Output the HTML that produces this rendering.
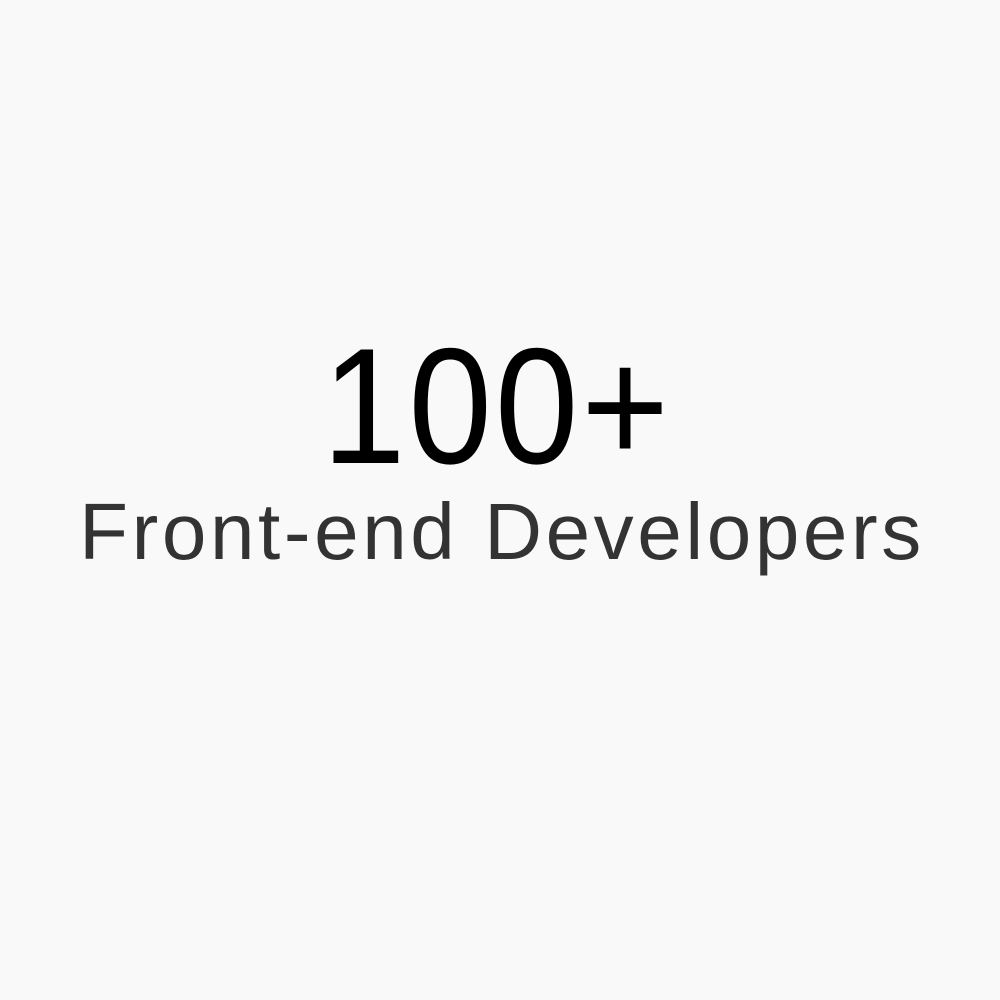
<!DOCTYPE html>
<html><head><style>
html,body{margin:0;padding:0;width:1000px;height:1000px;background:#f9f9f9;overflow:hidden}
.t{position:absolute;left:0;width:1000px;text-align:center;font-family:"Liberation Sans",Arial,sans-serif;line-height:1;white-space:nowrap}
.a{top:336px;left:-3px;font-size:150px;letter-spacing:3px;color:#000;transform:scaleY(1.1);transform-origin:50% 127px}
.b{top:492px;font-size:80px;letter-spacing:3.6px;color:#333;text-indent:4px}
</style></head><body>
<div class="t a">100+</div>
<div class="t b">Front-end Developers</div>
</body></html>
